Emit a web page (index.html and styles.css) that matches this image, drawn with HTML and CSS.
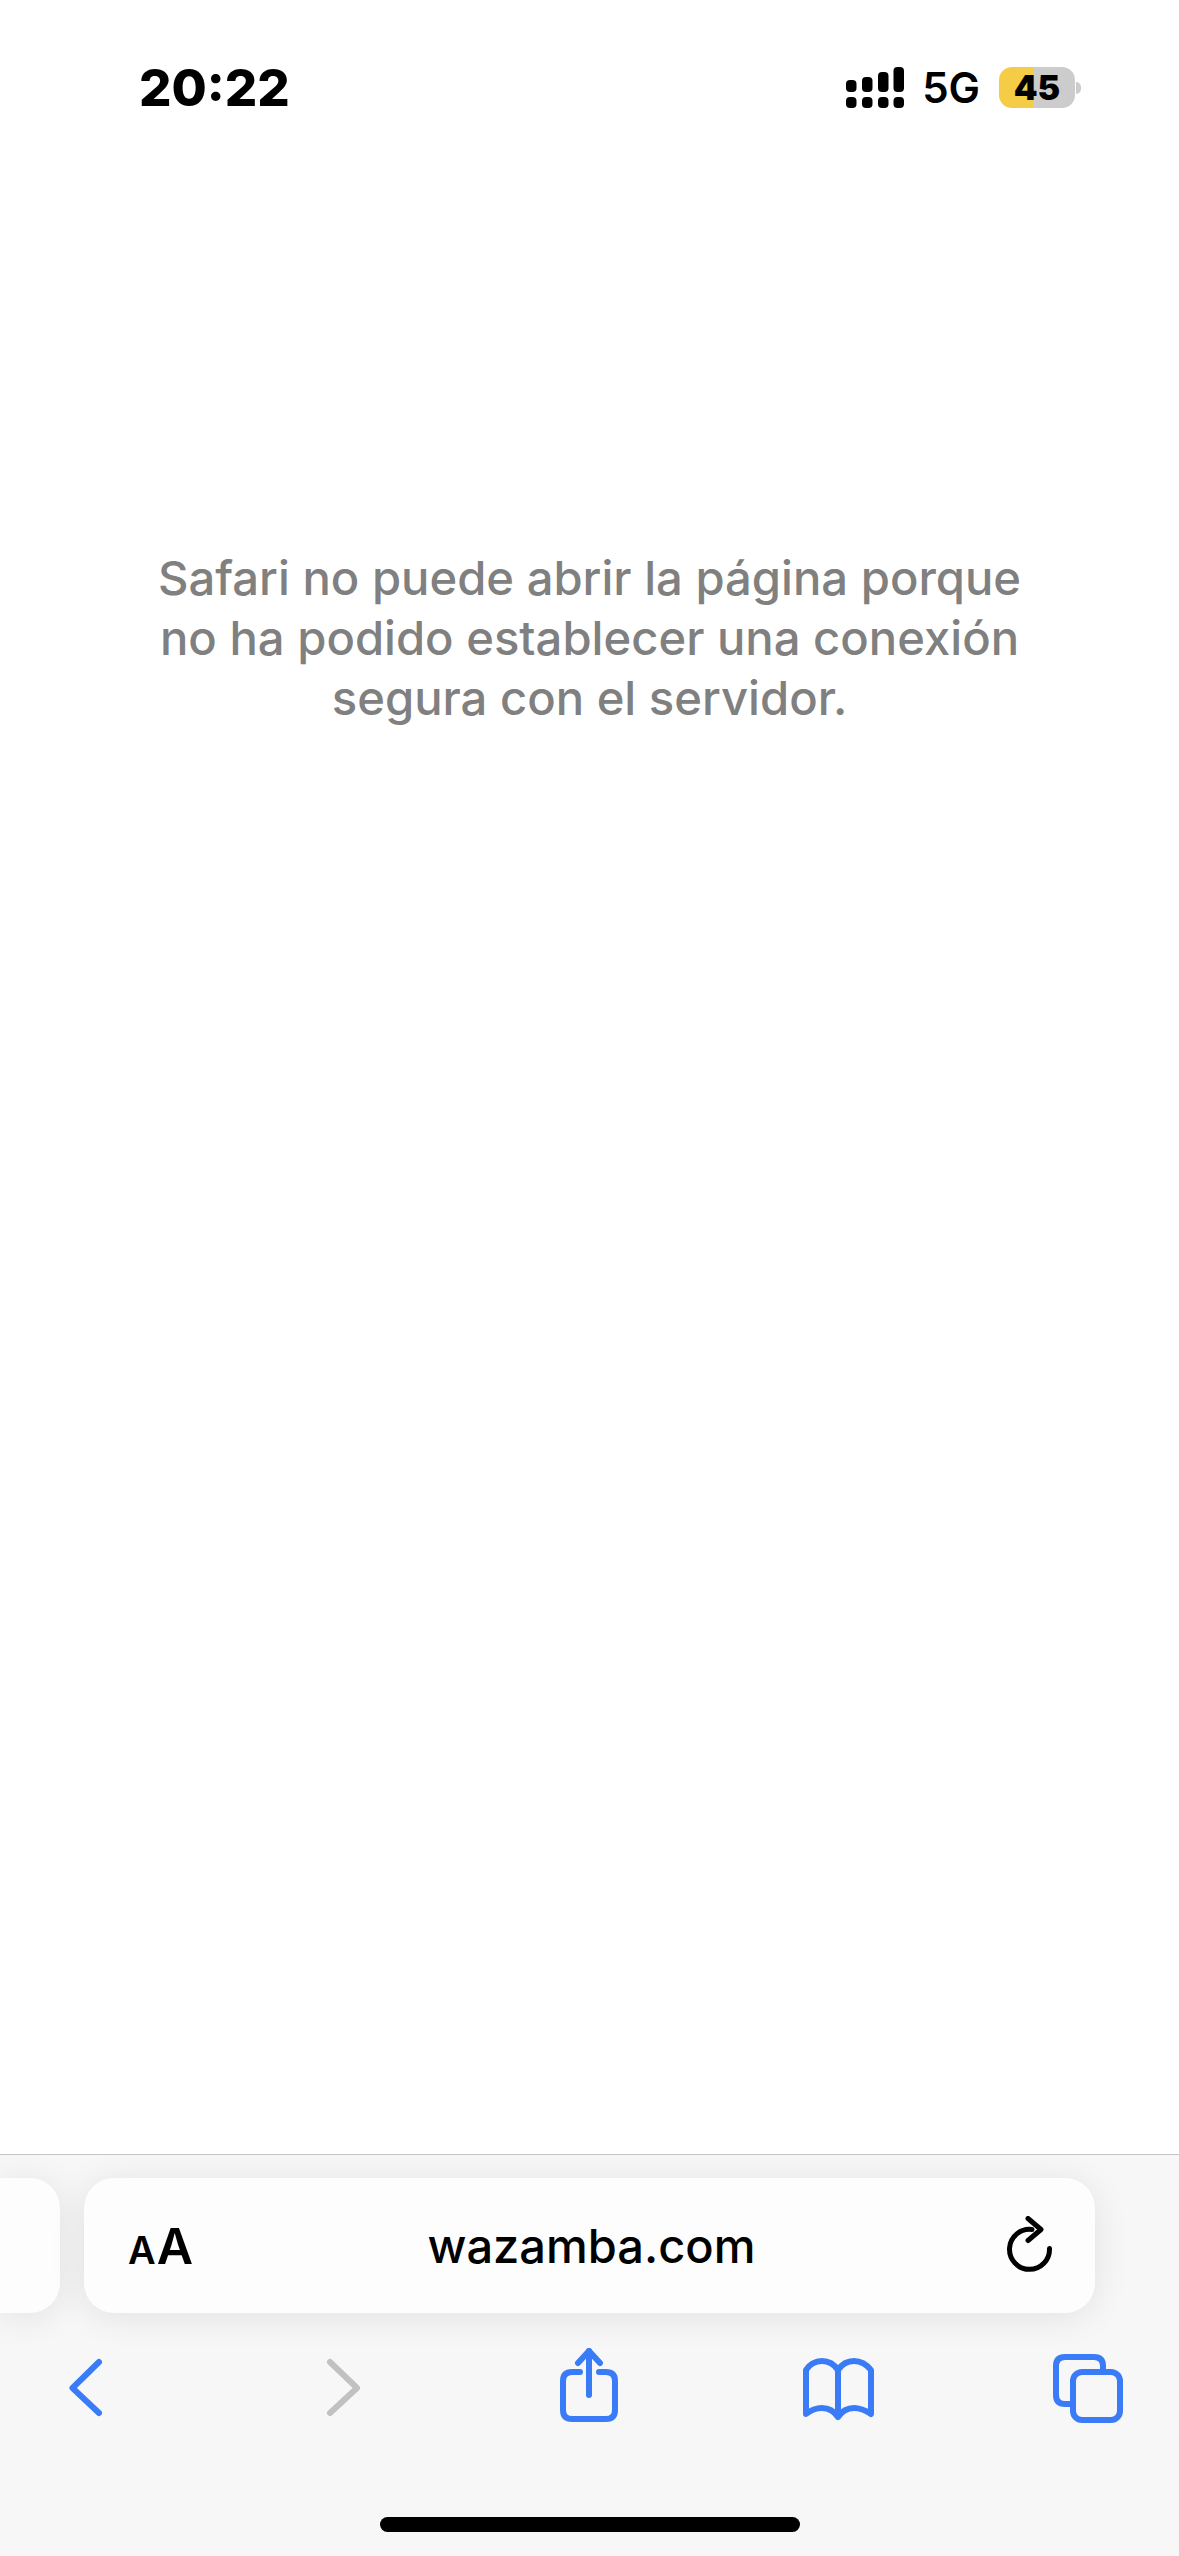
FILE: index.html
```html
<!DOCTYPE html>
<html lang="es">
<head>
    <meta charset="UTF-8">
    <meta name="viewport" content="width=device-width, initial-scale=1.0">
    <title>wazamba.com</title>
    <link rel="stylesheet" href="styles.css">
</head>
<body>
    <div class="phone">
        <div class="status-bar">
            <div class="time">20:22</div>
            <div class="status-icons">
                <svg class="signal" width="58" height="41" viewBox="0 0 58 41" fill="#000">
                    <rect x="0" y="13" width="10.5" height="12" rx="4"/>
                    <rect x="16" y="10" width="10.5" height="15" rx="4"/>
                    <rect x="32" y="5" width="10.5" height="20" rx="4"/>
                    <rect x="47.5" y="0" width="10.5" height="25" rx="4"/>
                    <rect x="0" y="30" width="10.5" height="11" rx="4"/>
                    <rect x="16" y="30" width="10.5" height="11" rx="4"/>
                    <rect x="32" y="30" width="10.5" height="11" rx="4"/>
                    <rect x="47.5" y="30" width="10.5" height="11" rx="4"/>
                </svg>
                <div class="network">5G</div>
                <div class="battery">
                    <div class="battery-body">45</div>
                    <div class="battery-nub"></div>
                </div>
            </div>
        </div>

        <div class="page">
            <p class="error-text">Safari no puede abrir la página porque<br>no ha podido establecer una conexión<br>segura con el servidor.</p>
        </div>

        <div class="toolbar">
            <div class="tabs-row">
                <div class="tab-peek"></div>
                <div class="address-bar">
                    <div class="reader-btn"><span class="small-a">A</span><span class="big-a">A</span></div>
                    <div class="url">wazamba.com</div>
                    <svg class="reload" width="50" height="60" viewBox="0 0 50 60" fill="none" stroke="#000" stroke-width="5" stroke-linecap="round" stroke-linejoin="round">
                        <path d="M27 13.5 A20 20 0 1 0 44.5 32.5"/>
                        <path d="M23 2.5 L36 13.5 L23 24.5"/>
                    </svg>
                </div>
            </div>

            <div class="nav-row">
                <svg class="nav-icon" viewBox="0 0 80 80" stroke="#3a7cf8">
                    <path d="M53 14 L26.5 40 L53 65"/>
                </svg>
                <svg class="nav-icon" viewBox="0 0 80 80" stroke="#c1c1c1">
                    <path d="M34 14 L61 40 L34 65"/>
                </svg>
                <svg class="nav-icon" viewBox="0 0 80 80" stroke="#3a7cf8">
                    <path d="M34 24 H26 Q17 24 17 33 V62 Q17 71 26 71 H60 Q69 71 69 62 V33 Q69 24 60 24 H53"/>
                    <path d="M43 47 V3"/>
                    <path d="M32 15 L43 3 L54 15"/>
                </svg>
                <svg class="nav-icon" viewBox="0 0 80 80" stroke="#3a7cf8">
                    <path d="M42 22 C38 16 32 13 26 13 C19 13 13 17 10 22 V66 C15 62 20 60 26 60 C32 60 38 63 42 69 C46 63 52 60 58 60 C64 60 69 62 75 66 V22 C71 17 65 13 58 13 C52 13 46 16 42 22 V69"/>
                </svg>
                <svg class="nav-icon" viewBox="0 0 80 80" stroke="#3a7cf8">
                    <path d="M24 56 H19 Q10 56 10 47 V18 Q10 9 19 9 H48 Q57 9 57 18 V24"/>
                    <rect x="27" y="24" width="47" height="48" rx="9"/>
                </svg>
            </div>

            <div class="home-indicator"></div>
        </div>
    </div>
</body>
</html>
```

FILE: styles.css
```css
/* base */
body {
    margin: 0;
    padding: 0;
    background: #fff;
    color: #000;
    font-family: Inter, "Liberation Sans", sans-serif;
}

.phone {
    width: 1179px;
    height: 2556px;
    display: flex;
    flex-direction: column;
    overflow: hidden;
}

/* status bar */
.status-bar {
    display: flex;
    justify-content: space-between;
    align-items: center;
    height: 41px;
    padding: 67px 98px 0 139px;
}

.time {
    font-size: 51px;
    font-weight: 800;
    line-height: 41px;
}

.status-icons {
    display: flex;
    align-items: center;
}

.network {
    margin-left: 18px;
    font-size: 42px;
    font-weight: 600;
    line-height: 41px;
}

.battery {
    display: flex;
    align-items: center;
    margin-left: 19px;
}

.battery-body {
    width: 76px;
    height: 41px;
    border-radius: 13px;
    background: linear-gradient(90deg, #f5cc45 45%, #cccccc 45%);
    font-size: 34px;
    font-weight: 900;
    line-height: 41px;
    text-align: center;
}

.battery-nub {
    width: 5px;
    height: 12px;
    margin-left: 1px;
    border-radius: 0 6px 6px 0;
    background: #ccc;
}

/* error message */
.page {
    flex: 1;
    padding-top: 440px;
}

.error-text {
    margin: 0;
    color: #808080;
    font-size: 47.2px;
    font-weight: 500;
    line-height: 60px;
    text-align: center;
}

/* safari toolbar */
.toolbar {
    height: 401px;
    border-top: 1px solid #c4c4c4;
    background: #f7f7f7;
    display: flex;
    flex-direction: column;
}

.tabs-row {
    display: flex;
    gap: 24px;
    margin-top: 23px;
}

.tab-peek,
.address-bar {
    height: 135px;
    background: #fdfdfd;
    box-shadow: 0 4px 36px rgba(0, 0, 0, 0.09);
}

.tab-peek {
    width: 60px;
    border-radius: 0 30px 30px 0;
}

.address-bar {
    width: 1011px;
    box-sizing: border-box;
    padding: 0 40px 0 44px;
    border-radius: 30px;
    display: grid;
    grid-template-columns: 1fr auto 1fr;
    align-items: center;
}

.reader-btn {
    font-weight: 600;
    line-height: 1;
}

.small-a {
    font-size: 38px;
    margin-right: 1px;
}

.big-a {
    font-size: 50px;
}

.url {
    font-size: 47px;
    font-weight: 500;
}

.reload {
    justify-self: end;
}

.nav-row {
    display: flex;
    gap: 170px;
    margin-top: 35px;
    padding-left: 46px;
}

.nav-icon {
    width: 80px;
    height: 80px;
    fill: none;
    stroke-width: 6;
    stroke-linecap: round;
    stroke-linejoin: round;
}

.home-indicator {
    width: 420px;
    height: 15px;
    margin: 89px auto 0;
    border-radius: 8px;
    background: #000;
}
```
